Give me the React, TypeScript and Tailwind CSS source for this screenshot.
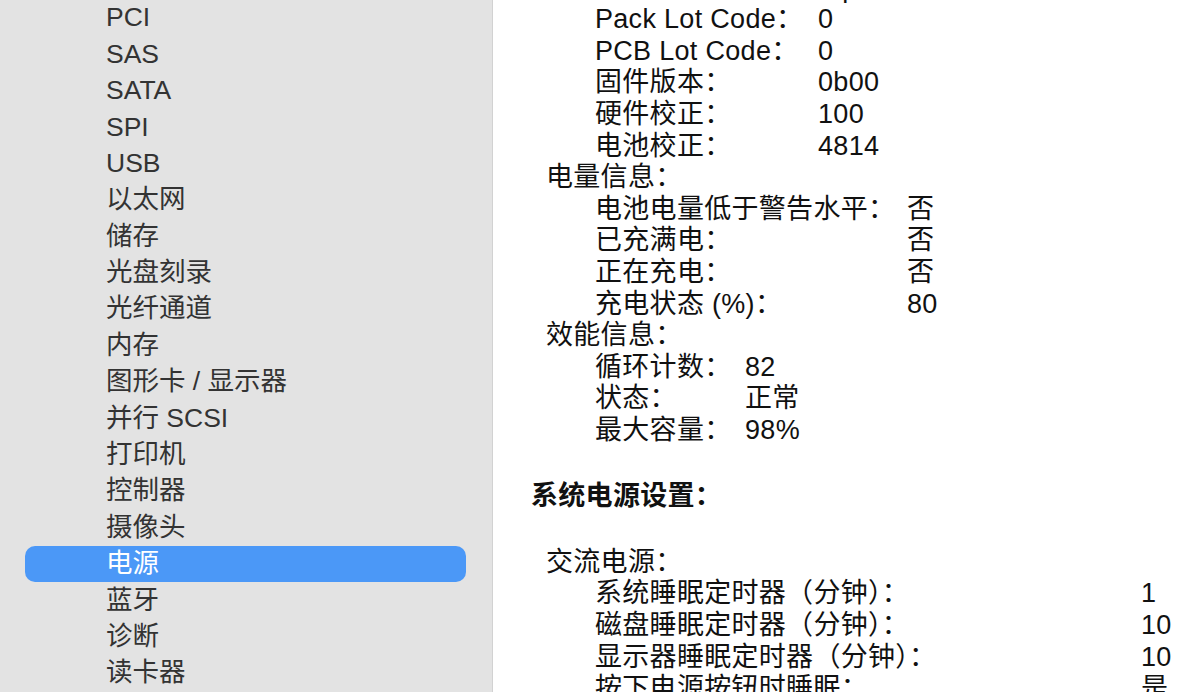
const sidebarItems = [
  "PCI",
  "SAS",
  "SATA",
  "SPI",
  "USB",
  "以太网",
  "储存",
  "光盘刻录",
  "光纤通道",
  "内存",
  "图形卡 / 显示器",
  "并行 SCSI",
  "打印机",
  "控制器",
  "摄像头",
  "电源",
  "蓝牙",
  "诊断",
  "读卡器",
];

type Row = [string, string];

function Group({ rows, labelWidth }: { rows: Row[]; labelWidth: string }) {
  return (
    <div className={`grid ${labelWidth} pl-[64px]`}>
      {rows.map(([label, value]) => (
        <div key={label} className="contents">
          <div className="h-[31.6px] leading-[31.6px] whitespace-nowrap">{label}</div>
          <div className="h-[31.6px] leading-[31.6px] whitespace-nowrap">{value}</div>
        </div>
      ))}
    </div>
  );
}

function SubHeading({ children }: { children: string }) {
  return <div className="h-[31.6px] leading-[31.6px] pl-[15px]">{children}</div>;
}

export default function App() {
  return (
    <div className="flex h-[692px] w-[1200px] overflow-hidden bg-white font-[family-name:'Liberation_Sans','Noto_Sans_CJK_SC',sans-serif]">
      {/* Sidebar */}
      <aside className="w-[493px] shrink-0 bg-[#e3e3e3] border-r border-[#d2d2d2] text-[#333] text-[26.5px]">
        <ul className="flex flex-col">
          {sidebarItems.map((item) => {
            const active = item === "电源";
            return (
              <li key={item} className="h-[36.4px] flex items-center">
                <div
                  className={
                    active
                      ? "ml-[25px] w-[441px] h-[36px] rounded-[10px] bg-[#4b98f7] text-white flex items-center pl-[81px]"
                      : "pl-[106px]"
                  }
                >
                  {item}
                </div>
              </li>
            );
          })}
        </ul>
      </aside>

      {/* Detail */}
      <main className="flex-1 pl-[38px] text-[#111] text-[27px] tracking-[0.3px] -mt-[27.4px]">
        <Group
          labelWidth="grid-cols-[223px_auto]"
          rows={[
            ["设备名称：", "bq40z651"],
            ["Pack Lot Code：", "0"],
            ["PCB Lot Code：", "0"],
            ["固件版本：", "0b00"],
            ["硬件校正：", "100"],
            ["电池校正：", "4814"],
          ]}
        />
        <SubHeading>电量信息：</SubHeading>
        <Group
          labelWidth="grid-cols-[312px_auto]"
          rows={[
            ["电池电量低于警告水平：", "否"],
            ["已充满电：", "否"],
            ["正在充电：", "否"],
            ["充电状态 (%)：", "80"],
          ]}
        />
        <SubHeading>效能信息：</SubHeading>
        <Group
          labelWidth="grid-cols-[150px_auto]"
          rows={[
            ["循环计数：", "82"],
            ["状态：", "正常"],
            ["最大容量：", "98%"],
          ]}
        />
        <div className="mt-[34.4px] mb-[34.4px] h-[31.6px] leading-[31.6px] font-bold">系统电源设置：</div>
        <SubHeading>交流电源：</SubHeading>
        <Group
          labelWidth="grid-cols-[546px_auto]"
          rows={[
            ["系统睡眠定时器（分钟）：", "1"],
            ["磁盘睡眠定时器（分钟）：", "10"],
            ["显示器睡眠定时器（分钟）：", "10"],
            ["按下电源按钮时睡眠：", "是"],
          ]}
        />
      </main>
    </div>
  );
}
